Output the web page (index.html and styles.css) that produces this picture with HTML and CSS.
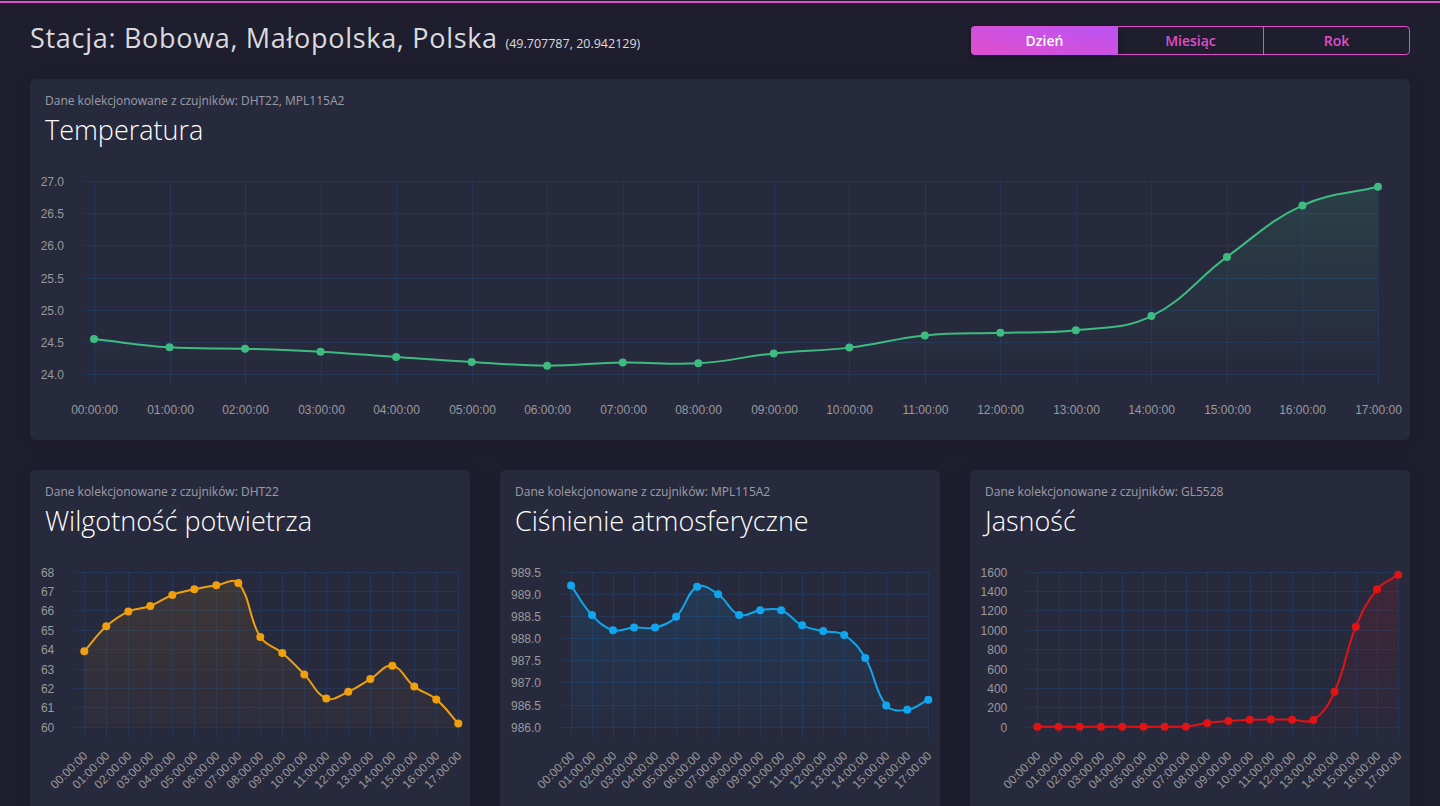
FILE: index.html
```html
<!DOCTYPE html>
<html lang="pl">
<head>
<meta charset="utf-8">
<title>Stacja: Bobowa, Małopolska, Polska</title>
<link rel="stylesheet" href="styles.css">
</head>
<body>
<div class="topline"></div>
<main class="page">
  <header class="page-head">
    <h1 class="station">Stacja: Bobowa, Małopolska, Polska <small class="coords">(49.707787, 20.942129)</small></h1>
    <div class="range-switch">
      <button class="range-btn active" type="button">Dzień</button>
      <button class="range-btn" type="button">Miesiąc</button>
      <button class="range-btn" type="button">Rok</button>
    </div>
  </header>

  <section class="card card-wide">
    <div class="card-head">
      <p class="card-sub">Dane kolekcjonowane z czujników: DHT22, MPL115A2</p>
      <h2 class="card-title">Temperatura</h2>
    </div>
    <svg class="chart chart-wide" id="chart-temp"></svg>
  </section>

  <div class="card-row">
    <section class="card">
      <div class="card-head">
        <p class="card-sub">Dane kolekcjonowane z czujników: DHT22</p>
        <h2 class="card-title">Wilgotność potwietrza</h2>
      </div>
      <svg class="chart chart-small" id="chart-hum"></svg>
    </section>
    <section class="card">
      <div class="card-head">
        <p class="card-sub">Dane kolekcjonowane z czujników: MPL115A2</p>
        <h2 class="card-title">Ciśnienie atmosferyczne</h2>
      </div>
      <svg class="chart chart-small" id="chart-press"></svg>
    </section>
    <section class="card">
      <div class="card-head">
        <p class="card-sub">Dane kolekcjonowane z czujników: GL5528</p>
        <h2 class="card-title">Jasność</h2>
      </div>
      <svg class="chart chart-small" id="chart-light"></svg>
    </section>
  </div>
</main>
<script src="charts.js"></script>
</body>
</html>
```

FILE: styles.css
```css
* { box-sizing: border-box; }

html, body {
  margin: 0;
  height: 100%;
}

body {
  background: #1e1e2f;
  color: rgba(255, 255, 255, 0.8);
  font-family: "Open Sans", "Noto Sans", sans-serif;
  overflow: hidden;
}

.topline {
  height: 3px;
  border-top: 1px solid #1e1e2f;
  background: #e14eca;
}

.page {
  padding: 23px 30px 0;
}

.page-head {
  display: flex;
  align-items: center;
  justify-content: space-between;
  height: 29px;
  margin-bottom: 24px;
}

.station {
  margin: 0;
  font-size: 27px;
  font-weight: 400;
  line-height: 29px;
  color: rgba(255, 255, 255, 0.85);
  letter-spacing: 0.7px;
  white-space: nowrap;
}

.coords {
  font-size: 12.5px;
  letter-spacing: 0;
}

.range-switch {
  display: flex;
  width: 439px;
  height: 29px;
}

.range-btn {
  flex: 1;
  margin: 0;
  padding: 0;
  border: 1px solid #e14eca;
  background: transparent;
  color: #e14eca;
  font-family: inherit;
  font-size: 14px;
  font-weight: 600;
  cursor: pointer;
}

.range-btn + .range-btn {
  margin-left: -1px;
}

.range-btn:first-child {
  border-radius: 4px 0 0 4px;
}

.range-btn:last-child {
  border-radius: 0 4px 4px 0;
}

.range-btn.active {
  color: #fff;
  border-color: transparent;
  background-image: linear-gradient(to bottom left, #ba54f5, #e14eca);
  box-shadow: 0 2px 6px rgba(0, 0, 0, 0.35);
  position: relative;
  z-index: 1;
}

.card {
  background: #27293d;
  border-radius: 6px;
  box-shadow: 0 1px 20px 0 rgba(0, 0, 0, 0.1);
  padding-top: 13px;
}

.card-wide {
  height: 361px;
}

.card-head {
  padding: 0 15px;
}

.card-sub {
  margin: 0;
  font-size: 12px;
  line-height: 18px;
  color: rgba(255, 255, 255, 0.55);
  font-weight: 400;
}

.card-title {
  margin: 0;
  font-size: 27px;
  line-height: 40px;
  font-weight: 300;
  color: #fff;
}

.chart {
  display: block;
  width: 100%;
}

.chart-wide {
  height: 280px;
}

.chart-small {
  height: 280px;
}

.card-row {
  display: grid;
  grid-template-columns: repeat(3, 1fr);
  gap: 30px;
  margin-top: 30px;
}

.chart .grid-line {
  stroke: rgba(29, 140, 248, 0.13);
  stroke-width: 1;
  shape-rendering: crispEdges;
}

.chart .tick-label {
  font-family: "Liberation Sans", Arial, sans-serif;
  font-size: 12px;
  fill: #9a9a9a;
}

.chart .series-line {
  fill: none;
  stroke-width: 2;
}
```

FILE: charts.js
```js
(function () {
  var NS = 'http://www.w3.org/2000/svg';
  var hours = [];
  for (var h = 0; h < 18; h++) {
    hours.push((h < 10 ? '0' : '') + h + ':00:00');
  }

  function el(name, attrs, parent) {
    var n = document.createElementNS(NS, name);
    for (var k in attrs) n.setAttribute(k, attrs[k]);
    if (parent) parent.appendChild(n);
    return n;
  }

  function controlPoints(pts, tension, top, bottom) {
    var res = [];
    for (var i = 0; i < pts.length; i++) {
      var p0 = pts[i - 1] || pts[i];
      var p1 = pts[i];
      var p2 = pts[i + 1] || pts[i];
      var d01 = Math.hypot(p1.x - p0.x, p1.y - p0.y);
      var d12 = Math.hypot(p2.x - p1.x, p2.y - p1.y);
      var s01 = d01 / (d01 + d12) || 0;
      var s12 = d12 / (d01 + d12) || 0;
      var fa = tension * s01, fb = tension * s12;
      var prev = { x: p1.x - fa * (p2.x - p0.x), y: p1.y - fa * (p2.y - p0.y) };
      var next = { x: p1.x + fb * (p2.x - p0.x), y: p1.y + fb * (p2.y - p0.y) };
      prev.y = Math.min(bottom, Math.max(top, prev.y));
      next.y = Math.min(bottom, Math.max(top, next.y));
      res.push({ prev: prev, next: next });
    }
    return res;
  }

  function draw(id, cfg) {
    var svg = document.getElementById(id);
    var W = svg.clientWidth;
    var H = svg.clientHeight;
    svg.setAttribute('viewBox', '0 0 ' + W + ' ' + H);

    var left = cfg.left, right = cfg.right, top = cfg.top, bottom = cfg.bottom;
    var n = cfg.data.length;
    var stepX = (right - left) / (n - 1);
    function yOf(v) { return bottom - (v - cfg.min) / (cfg.max - cfg.min) * (bottom - top); }

    var defs = el('defs', {}, svg);
    var gid = id + '-grad';
    var grad = el('linearGradient', { id: gid, gradientUnits: 'userSpaceOnUse', x1: 0, y1: top, x2: 0, y2: bottom }, defs);
    el('stop', { offset: '0', 'stop-color': cfg.color, 'stop-opacity': cfg.fillTop }, grad);
    el('stop', { offset: '1', 'stop-color': cfg.color, 'stop-opacity': cfg.fillBottom }, grad);

    var g = el('g', {}, svg);
    for (var v = cfg.min; v <= cfg.max + 1e-9; v += cfg.step) {
      var y = Math.round(yOf(v)) + 0.5;
      el('line', { 'class': 'grid-line', x1: left - 10, x2: right, y1: y, y2: y }, g);
      var t = el('text', { 'class': 'tick-label', x: left - 30, y: y, 'text-anchor': 'end', 'dominant-baseline': 'central' }, g);
      t.textContent = v.toFixed(cfg.decimals);
    }
    for (var i = 0; i < n; i++) {
      var x = Math.round(left + i * stepX) + 0.5;
      el('line', { 'class': 'grid-line', x1: x, x2: x, y1: Math.round(top), y2: bottom + 10 }, g);
      var lbl;
      if (cfg.rotate) {
        var ax = x + 1, ay = bottom + cfg.labelY;
        lbl = el('text', { 'class': 'tick-label', x: ax, y: ay, 'text-anchor': 'end', 'dominant-baseline': 'central', transform: 'rotate(-45 ' + ax + ' ' + ay + ')' }, g);
      } else {
        lbl = el('text', { 'class': 'tick-label', x: x, y: bottom + cfg.labelY, 'text-anchor': 'middle', 'dominant-baseline': 'central' }, g);
      }
      lbl.textContent = hours[i];
    }

    var pts = cfg.data.map(function (v, i) { return { x: left + i * stepX, y: yOf(v) }; });
    var cps = controlPoints(pts, 0.4, top, bottom);
    var d = 'M' + pts[0].x.toFixed(2) + ' ' + pts[0].y.toFixed(2);
    for (var j = 1; j < pts.length; j++) {
      var a = cps[j - 1].next, b = cps[j].prev, p = pts[j];
      d += ' C' + a.x.toFixed(2) + ' ' + a.y.toFixed(2) + ' ' + b.x.toFixed(2) + ' ' + b.y.toFixed(2) + ' ' + p.x.toFixed(2) + ' ' + p.y.toFixed(2);
    }
    el('path', { d: d + ' L' + right + ' ' + bottom + ' L' + left + ' ' + bottom + ' Z', fill: 'url(#' + gid + ')', stroke: 'none' }, svg);
    el('path', { d: d, 'class': 'series-line', stroke: cfg.color }, svg);
    pts.forEach(function (p) {
      el('circle', { cx: p.x.toFixed(2), cy: p.y.toFixed(2), r: cfg.r, fill: cfg.color }, svg);
    });
  }

  draw('chart-temp', {
    left: 64, right: 1348, top: 31, bottom: 224, labelY: 36,
    min: 24, max: 27, step: 0.5, decimals: 1, r: 4,
    color: '#3dbb80', fillTop: 0.16, fillBottom: 0.0,
    data: [24.544, 24.415, 24.393, 24.347, 24.264, 24.186, 24.129, 24.18, 24.166, 24.32, 24.41, 24.6, 24.64, 24.68, 24.9, 25.82, 26.62, 26.91]
  });

  draw('chart-hum', {
    left: 54.3, right: 428.3, top: 30.7, bottom: 185.7, labelY: 27, rotate: true,
    min: 60, max: 68, step: 1, decimals: 0, r: 4,
    color: '#f0a00c', fillTop: 0.12, fillBottom: 0.03,
    data: [63.89, 65.18, 65.94, 66.23, 66.8, 67.09, 67.3, 67.42, 64.63, 63.8, 62.7, 61.46, 61.8, 62.46, 63.15, 62.07, 61.41, 60.16]
  });

  draw('chart-press', {
    left: 71, right: 428.3, top: 30.7, bottom: 185.7, labelY: 27, rotate: true,
    min: 986, max: 989.5, step: 0.5, decimals: 1, r: 4,
    color: '#10a6ee', fillTop: 0.14, fillBottom: 0.03,
    data: [989.19, 988.52, 988.18, 988.24, 988.24, 988.48, 989.16, 988.99, 988.52, 988.63, 988.63, 988.29, 988.16, 988.07, 987.55, 986.48, 986.38, 986.61]
  });

  draw('chart-light', {
    left: 67.3, right: 428.3, top: 30.7, bottom: 185.7, labelY: 27, rotate: true,
    min: 0, max: 1600, step: 200, decimals: 0, r: 4,
    color: '#e01414', fillTop: 0.14, fillBottom: 0.02,
    data: [0, 0, 0, 0, 0, 0, 0, 0, 38, 59, 72, 75, 72, 70, 361, 1032, 1418, 1569]
  });
})();
```
